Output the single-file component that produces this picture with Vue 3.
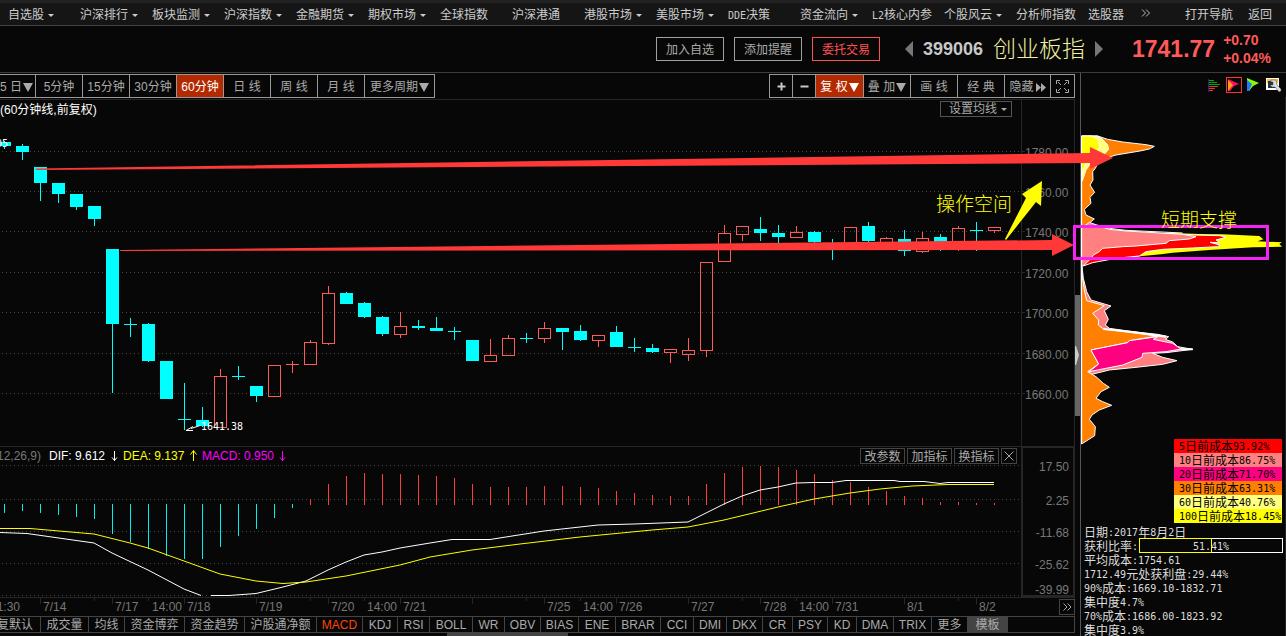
<script setup>
const navItems = [
  ['自选股', true], ['沪深排行', true], ['板块监测', true], ['沪深指数', true], ['金融期货', true],
  ['期权市场', true], ['全球指数', false], ['沪深港通', false], ['港股市场', true], ['美股市场', true],
  ['DDE决策', false], ['资金流向', true], ['L2核心内参', false], ['个股风云', true],
  ['分析师指数', false], ['选股器', false],
]

const periods = ['5分钟', '15分钟', '30分钟', '60分钟', '日 线', '周 线', '月 线']

// [kind, body top, body bottom, wick top, wick bottom]; d = falling, u = rising
const candles = [
  ['d', 142, 146, 141, 149], ['d', 146, 152, 144, 160], ['d', 167, 183, 167, 201], ['d', 183, 194, 183, 203],
  ['d', 194, 207, 194, 210], ['d', 206, 219, 206, 226], ['d', 249, 324, 249, 393], ['d', 324, 325, 318, 337],
  ['d', 324, 361, 323, 362], ['d', 361, 399, 361, 399], ['d', 419, 420, 383, 430], ['d', 420, 426, 407, 427],
  ['u', 376, 428, 369, 428], ['d', 376, 377, 366, 380], ['d', 386, 396, 386, 402], ['u', 365, 397, 365, 397],
  ['u', 364, 365, 361, 373], ['u', 342, 365, 340, 365], ['u', 293, 344, 286, 345], ['d', 293, 304, 292, 304],
  ['d', 303, 317, 302, 318], ['d', 317, 334, 316, 336], ['u', 326, 335, 312, 338], ['d', 326, 328, 320, 330],
  ['d', 328, 331, 317, 331], ['d', 331, 332, 327, 340], ['d', 340, 361, 340, 361], ['u', 355, 362, 339, 362],
  ['u', 338, 356, 335, 356], ['d', 338, 339, 333, 343], ['u', 328, 339, 322, 343], ['d', 328, 332, 328, 350],
  ['d', 331, 340, 325, 341], ['u', 335, 341, 335, 347], ['d', 332, 347, 326, 347], ['d', 347, 348, 338, 352],
  ['d', 348, 352, 344, 353], ['u', 349, 353, 349, 363], ['u', 350, 355, 338, 361], ['u', 262, 351, 262, 357],
  ['u', 233, 262, 225, 262], ['u', 226, 235, 226, 241], ['d', 229, 233, 217, 241], ['d', 233, 237, 225, 243],
  ['u', 232, 238, 226, 238], ['d', 232, 242, 231, 243], ['d', 244, 245, 239, 260], ['u', 227, 245, 227, 245],
  ['d', 226, 241, 222, 243], ['u', 238, 244, 237, 244], ['d', 239, 251, 230, 256], ['u', 238, 252, 232, 253],
  ['d', 237, 245, 234, 251], ['u', 228, 244, 226, 251], ['d', 230, 231, 222, 251], ['u', 227, 231, 227, 233],
].map(([kind, top, bottom, high, low], i) => ({ kind, top, bottom, high, low, x: 4 + 18 * i }))

const priceLevels = [
  ['1780.00', 151], ['1760.00', 191], ['1740.00', 231], ['1720.00', 272],
  ['1700.00', 312], ['1680.00', 353], ['1660.00', 393],
]

const macdBars = [
  513, 511, 513, 515, 517, 519, 534, 542, 549, 556, 559, 559, 547, 536, 529, 518, 508,
  499, 484, 476, 473, 474, 474, 475, 476, 478, 484, 487, 487, 487, 486, 486, 487, 488,
  491, 493, 495, 496, 496, 484, 473, 467, 466, 467, 470, 474, 480, 482, 487, 491, 496,
  498, 502, 502, 503, 503,
].map((v, i) => ({ x: 4 + 18 * i, down: i < 17, top: i < 17 ? 504 : v, height: i < 17 ? v - 504 : 505 - v }))

const macdGrid = [465, 499, 531, 563, 595]
const macdLevels = [['17.50', 471], ['2.25', 505], ['-11.68', 537], ['-25.62', 569], ['-39.99', 594]]

const dates = [
  ['7/14', 43], ['7/17', 115], ['14:00', 152], ['7/18', 187], ['7/19', 259], ['7/20', 331],
  ['14:00', 367], ['7/21', 403], ['7/25', 547], ['14:00', 583], ['7/26', 619], ['7/27', 691],
  ['7/28', 763], ['14:00', 799], ['7/31', 835], ['8/1', 907], ['8/2', 979],
]
const longTicks = [40, 112, 184, 256, 328, 400, 472, 544, 616, 688, 760, 832, 904, 976]
const shortTicks = [94, 148, 310, 364, 526, 580, 742, 796, 958]

const tabs = [
  ['成交量', 48], ['均线', 36], ['资金博弈', 60], ['资金趋势', 60], ['沪股通净额', 72], ['MACD', 46],
  ['KDJ', 35], ['RSI', 32], ['BOLL', 43], ['WR', 32], ['OBV', 36], ['BIAS', 38], ['ENE', 37],
  ['BRAR', 45], ['CCI', 33], ['DMI', 33], ['DKX', 36], ['CR', 30], ['PSY', 35], ['KD', 29],
  ['DMA', 37], ['TRIX', 38], ['更多', 36],
]

const legend = [
  ['5日前成本93.92%', 'd5'], ['10日前成本86.75%', 'd10'], ['20日前成本71.70%', 'd20'],
  ['30日前成本63.31%', 'd30'], ['60日前成本40.76%', 'd60'], ['100日前成本18.45%', 'd100'],
]

const facts = [
  '平均成本:1754.61', '1712.49元处获利盘:29.44%', '90%成本:1669.10-1832.71',
  '集中度4.7%', '70%成本:1686.00-1823.92', '集中度3.9%',
]

const profit = 51.41

// Splits a label into Latin and Chinese runs so that each gets its own face
const runs = (s) => s.split(/([\x20-\x7e]+)/).filter(Boolean).map((t) => ({ t, latin: /^[\x20-\x7e]/.test(t) }))
</script>

<template>
  <div class="app">
    <nav class="nav">
      <a v-for="[label, menu] in navItems" :key="label" href="#" class="nav-item"><span v-for="(r, i) in runs(label)" :key="i" :class="{ mono: r.latin }">{{ r.t }}</span><i v-if="menu" class="caret"></i></a>
      <a href="#" class="nav-more" aria-label="更多">
        <svg width="10" height="8" viewBox="0 0 10 8"><path d="M1 0.500l3.500 3.500L1 7.500M5 0.500l3.500 3.500L5 7.500" fill="none" stroke="#bbb" /></svg>
      </a>
      <div class="nav-end">
        <a href="#">打开导航</a>
        <a href="#">返回</a>
      </div>
    </nav>

    <header class="quote">
      <div class="actions">
        <button type="button">加入自选</button>
        <button type="button">添加提醒</button>
        <button type="button" class="trade">委托交易</button>
      </div>
      <div class="stock">
        <button type="button" class="step" aria-label="上一只"><svg width="9" height="16" viewBox="0 0 9 16"><path d="M9 0v16L1 8z" fill="#777" /></svg></button>
        <span class="code">399006</span>
        <h1>创业板指</h1>
        <button type="button" class="step" aria-label="下一只"><svg width="9" height="16" viewBox="0 0 9 16"><path d="M0 0v16l8-8z" fill="#777" /></svg></button>
      </div>
      <div class="price">
        <strong>1741.77</strong>
        <div class="change"><span>+0.70</span><span>+0.04%</span></div>
      </div>
    </header>

    <main class="workspace">
      <section class="charts">
        <div class="toolbar">
          <div class="group periods">
            <button type="button" class="first">5 日<i class="tri"></i></button>
            <button v-for="p in periods" :key="p" type="button" :class="{ active: p === '60分钟' }">{{ p }}</button>
            <button type="button" class="wide">更多周期<i class="tri"></i></button>
          </div>
          <div class="group tools">
            <button type="button" class="small" aria-label="放大"><svg width="9" height="9" viewBox="0 0 9 9"><path d="M4.500 0.500v8M0.500 4.500h8" stroke="#c8c8c8" stroke-width="2" /></svg></button>
            <button type="button" class="small" aria-label="缩小"><svg width="9" height="9" viewBox="0 0 9 9"><path d="M0.500 4.500h8" stroke="#c8c8c8" stroke-width="2" /></svg></button>
            <button type="button" class="active">复 权<i class="tri"></i></button>
            <button type="button">叠 加<i class="tri"></i></button>
            <button type="button">画 线</button>
            <button type="button">经 典</button>
            <button type="button" class="hide">隐藏<svg width="10" height="9" viewBox="0 0 10 9"><path d="M0 0l5 4.500L0 9zM5 0l5 4.500L5 9z" fill="#aaa" /></svg></button>
            <button type="button" class="small" aria-label="全屏"><svg width="13" height="13" viewBox="0 0 13 13"><path d="M0.500 4V0.500H4M9 0.500h3.500V4M0.500 9v3.500H4M12.500 9v3.500H9" fill="none" stroke="#aaa" /><path d="M2 2l3 3M11 2L8 5M2 11l3-3M11 11L8 8" stroke="#aaa" /></svg></button>
          </div>
        </div>

        <div class="pane">
          <svg class="plot" viewBox="0 99 1080 347" role="img" aria-label="60分钟K线">
            <path d="M0 99.500H1075M1021.500 99V446M1074.500 99V446" class="frame" />
            <path v-for="[label, y] in priceLevels" :key="label" :d="`M2 ${y + 0.5}H1021`" class="dots" />
            <path v-for="[label, y] in priceLevels" :key="'t' + label" :d="`M1022 ${y + 0.5}h3`" class="frame" />
            <g v-for="c in candles" :key="c.x" :class="c.kind === 'd' ? 'fall' : 'rise'">
              <template v-if="c.kind === 'd' || c.bottom - c.top < 2">
                <rect :x="c.x" :y="c.high" width="1" :height="c.low - c.high" />
                <rect :x="c.x - 6" :y="c.top" width="13" :height="c.bottom - c.top" />
              </template>
              <template v-else>
                <rect :x="c.x" :y="c.high" width="1" :height="c.top - c.high" />
                <rect :x="c.x" :y="c.bottom" width="1" :height="c.low - c.bottom" />
                <rect :x="c.x - 5.5" :y="c.top + 0.5" width="12" :height="c.bottom - c.top - 1" class="hollow" />
              </template>
            </g>
            <text v-for="[label, y] in priceLevels" :key="'l' + label" x="1025" :y="y + 6" class="axis">{{ label }}</text>
            <text x="-4" y="147" class="mark">05</text>
            <path d="M186 430.500l7-4M186 430.500h7M191 428.500l9-3" stroke="#fff" fill="none" />
            <text x="201" y="430" class="mark">1641.38</text>
            <rect x="1075" y="295" width="5" height="121" fill="#666" />
            <path d="M1075 346h1l3 9-3 10h-1z" fill="#ccc" />
          </svg>
          <div class="caption">(60分钟线,前复权)</div>
          <button type="button" class="ma">设置均线<i class="caret"></i></button>
        </div>

        <div class="pane">
          <svg class="plot" viewBox="0 446 1080 170" role="img" aria-label="MACD">
            <path d="M0 446.500H1075M1074.500 446V616M0 597.500H1075" class="frame" />
            <rect x="1022" y="447" width="52" height="149" class="frame heavy" />
            <path v-for="y in macdGrid" :key="y" :d="`M2 ${y + 0.5}H1021`" class="dots" />
            <rect v-for="b in macdBars" :key="b.x" :x="b.x" :y="b.top" width="1" :height="b.height" :class="b.down ? 'bar-down' : 'bar-up'" />
            <path class="dif" d="M0 532.500L27 533.500 94 543 112 553 148 570 184 589 201 595.500M211 595.500H229L256 593.500 283 587 306 581 328 570 346 562 364 555 382 552 400 548 430 543 452 539.500H490L544 531 598 525 634 524 688 522 706 513 724 504 742 496 760 490 778 487 796 483 814 482.500H832L846 480.500H894L900 481.500H924L940 483.500 948 482.500H994" />
            <path class="dea" d="M0 528.500H30L94 534 130 543 148 548 184 561 220 574 256 581 283 583.500 306 582 346 576 400 565 430 557 472 550 520 544 580 537 652 530 688 527 724 520 778 507 814 499 850 493 880 489 912 486 948 484.500H994" />
            <path v-for="x in longTicks" :key="'a' + x" :d="`M${x + 0.5} 598v6`" class="frame" />
            <path v-for="x in shortTicks" :key="'b' + x" :d="`M${x + 0.5} 598v3`" class="frame" />
            <text v-for="[label, y] in macdLevels" :key="label" x="1069" :y="y" text-anchor="end" class="axis">{{ label }}</text>
            <text x="20" y="611" text-anchor="end" class="axis">1:30</text>
            <text v-for="[label, x] in dates" :key="'d' + x" :x="x" y="611" class="axis">{{ label }}</text>
            <text x="41" y="460" text-anchor="end" class="axis">12,26,9)</text>
            <text x="49" y="460" class="ind white">DIF: 9.612</text>
            <path d="M114.500 451v10M112 457.500l2.500 3 2.500-3" stroke="#fff" fill="none" />
            <text x="123" y="460" class="ind yellow">DEA: 9.137</text>
            <path d="M193.500 461V451M190.500 454.500l3-4 3 4" stroke="#ff0" fill="none" />
            <text x="202" y="460" class="ind magenta">MACD: 0.950</text>
            <path d="M282.500 451v10M280 457.500l2.500 3 2.500-3" stroke="#f0f" fill="none" />
          </svg>
          <div class="pane-tools">
            <button type="button">改参数</button>
            <button type="button">加指标</button>
            <button type="button">换指标</button>
            <button type="button" class="close" aria-label="关闭"><svg width="10" height="10" viewBox="0 0 10 10"><path d="M0.500 0.500l9 9M9.500 0.500l-9 9" stroke="#aaa" /></svg></button>
          </div>
          <button type="button" class="next" aria-label="下一页"><svg width="9" height="8" viewBox="0 0 9 8"><path d="M0.500 0.500L4 4 0.500 7.500M4.500 0.500L8 4 4.500 7.500" fill="none" stroke="#aaa" /></svg></button>
        </div>

        <div class="tabs">
          <button type="button" class="lead">复默认</button>
          <button v-for="[label, w] in tabs" :key="label" type="button" :class="{ on: label === 'MACD' }" :style="{ width: w + 'px' }">{{ label }}</button>
          <button type="button" class="template">模板</button>
        </div>
        <div class="handle"></div>
      </section>

      <aside class="chips">
        <div class="chip-tools">
          <button type="button" aria-label="筹码分布"><svg width="16" height="16" viewBox="0 0 16 16"><path d="M2.500 2v13" stroke="#23238c" /><path d="M3 3.500h5M3 5.500h8M3 7.500h11" stroke="#0a0" /><path d="M3 9.500h9M3 11.500h6M3 13.500h4" stroke="#e33" /></svg></button>
          <button type="button" aria-label="火焰山" class="picked"><svg width="14" height="14" viewBox="0 0 14 14"><path d="M1 1l11 5-5 2-4 5H1z" fill="#ff1060" /><path d="M1 2l5 5-5 6z" fill="#ffa010" /></svg></button>
          <button type="button" aria-label="活跃度"><svg width="16" height="16" viewBox="0 0 16 16"><path d="M1 1l12 5-6 3-4 5H1z" fill="#8f0" /><path d="M1 3l5 4-3 7H1z" fill="#27f" /></svg></button>
          <button type="button" aria-label="设置"><svg width="16" height="16" viewBox="0 0 16 16"><path d="M0 1h13v12H0z" fill="#fff" /><path d="M1 2h11v4H1z" fill="#fb2" /><path d="M2 4h8v7H2z" fill="#234" /><path d="M5 3h5l1 5 4 4v2l-2 1-4-5H6L4 8h3V5H5z" fill="#ddd" stroke="#444" stroke-width=".5" /></svg></button>
        </div>
        <svg class="chip-chart" viewBox="1080 97 206 342" role="img" aria-label="筹码分布图">
          <path d="M1080.500 97v539" stroke="#555" />
          <path d="M1285.500 97v539" stroke="#222" />
          <g transform="translate(1066 120) scale(.33333)" class="layers">
            <path fill="#ff8000" d="M47 48H95L125 58 170 66 240 74 265 79 250 87 222 93 150 105 100 120 88 145 80 155 81 180 72 195 86 217 72 232 75 250 55 268 60 285 85 297 66 312 55 318 47 325z" />
            <path fill="#ffff80" d="M47 48H95L110 58 125 75 128 88 110 108 75 128 60 150 50 180 47 185z" />
            <path fill="#ff0" d="M47 48H78L95 58 102 78 97 90 60 128 50 155 47 160z" />
            <path fill="#ff0" class="bare" d="M300 338L400 342 470 343 580 348 592 358 575 364 648 367 640 372 648 380 560 382 430 390 320 398 285 403 230 408 200 412 180 390z" />
            <path fill="#f00" d="M47 335L380 345 462 347 480 352 450 360 462 368 432 367 462 375 455 380 380 384 290 388 240 395 220 408 150 415 80 428 52 438z" />
            <path fill="#ff8080" d="M47 325L70 307 92 315 130 328 180 333 350 343 390 350 370 357 310 362 300 370 210 378 170 380 110 385 100 395 82 405 75 415 55 435 47 440z" />
            <path class="edge" d="M92 315L130 325 180 331 350 339" />
            <path fill="#ff8080" d="M48 440L52 475 62 515 75 540 135 558 115 572 127 598 118 615 130 625 200 635 275 643 308 650 298 658 320 666 335 680 380 688 300 698 260 700 290 712 333 722 290 733 210 742 130 750 90 760 47 770z" />
            <path fill="#ff8000" d="M47 455L55 510 62 542 115 557 80 580 98 600 97 615 112 627 190 637 275 648 190 662 185 668 75 690 98 732 65 755 90 770 112 790 130 802 105 815 90 835 110 845 137 856 100 870 78 885 70 898 88 920 86 947 50 970 47 972z" />
            <path fill="#ff0080" d="M75 690L185 668 190 662 275 650 262 658 320 670 345 687 300 695 230 700 228 712 170 735 70 755 98 732z" />
            <path class="edge thick" d="M112 627L200 636 300 650M345 688H380" />
          </g>
          <path d="M1081.500 136v308" stroke="#fff" />
        </svg>
        <ul class="legend">
          <li v-for="[label, cls] in legend" :key="cls" :class="cls"><span v-for="(r, i) in runs(label)" :key="i" :class="{ mono: r.latin }">{{ r.t }}</span></li>
        </ul>
        <div class="facts">
          <p><span v-for="(r, i) in runs('日期:2017年8月2日')" :key="i" :class="{ mono: r.latin }">{{ r.t }}</span></p>
          <p class="ratio">
            获利比率<span class="mono">:</span>
            <span class="meter"><i :style="{ width: profit + '%' }"></i><span class="mono">{{ profit }}%</span></span>
          </p>
          <p v-for="f in facts" :key="f"><span v-for="(r, i) in runs(f)" :key="i" :class="{ mono: r.latin }">{{ r.t }}</span></p>
        </div>
      </aside>

      <svg class="notes" viewBox="0 73 1286 563" aria-hidden="true">
        <path fill="#ff3838" d="M36 168.500L1090 153V147L1113 158 1090 169V163L36 170z" />
        <path fill="#ff3838" d="M120 250L1052 240V234L1074 245 1052 256V250L120 251z" />
        <path fill="#ff0" d="M1005 239L1026 198 1022 194 1042 181 1041 206 1036 202 1006 240z" />
        <rect x="1074.500" y="226.500" width="193" height="32" fill="none" stroke="#f522f5" stroke-width="3" />
        <text x="936" y="211">操作空间</text>
        <text x="1161" y="227">短期支撑</text>
      </svg>
    </main>
  </div>
</template>

<style>
body {
  margin: 0;
  background: #070707;
}
</style>

<style scoped>
.app {
  min-height: 100vh;
  background: #070707;
  color: #aaa;
  font: 12px/14px "Liberation Sans", "Noto Sans CJK SC", sans-serif;
  overflow: hidden;
}
.app *, .app *::before { box-sizing: border-box; }
button {
  margin: 0;
  padding: 0;
  border: 0;
  background: none;
  color: inherit;
  font: inherit;
  white-space: nowrap;
}
a { color: inherit; text-decoration: none; white-space: nowrap; }
.mono { font-family: "DejaVu Sans Mono", monospace; font-size: 10px; }
.caret {
  display: inline-block;
  border: 3px solid transparent;
  border-top-color: currentColor;
  border-bottom: 0;
  margin-left: 4px;
  vertical-align: middle;
}
.tri {
  border: 5px solid transparent;
  border-top: 9px solid currentColor;
  border-bottom: 0;
  margin-left: 1px;
}

.nav {
  display: flex;
  align-items: center;
  height: 26px;
  padding: 2px 14px 0 8px;
  border-top: 3px solid #222;
  border-bottom: 1px solid #444;
  background: #151515;
  color: #ccc;
}
.nav-item { width: 72px; flex: none; }
.nav-more { padding-left: 1px; margin-top: -4px; margin-left: -20px; }
.nav-end { display: flex; gap: 15px; margin-left: auto; }

.quote {
  display: flex;
  align-items: center;
  justify-content: flex-end;
  height: 47px;
  padding-right: 15px;
  border-bottom: 1px solid #3c3c3c;
}
.actions { display: flex; gap: 10px; margin-right: 24px; }
.actions button { width: 68px; height: 24px; padding-top: 2px; border: 1px solid #a0a0a0; }
.actions .trade { border-color: #ff5050; color: #ff5050; }
.stock { display: flex; align-items: center; gap: 10px; margin-right: 28px; }
.step { display: flex; width: 9px; }
.code { color: #c8c8c8; font-weight: bold; font-size: 18px; }
h1 { margin: 0; color: #f0f0a0; font-size: 23px; line-height: 24px; font-weight: 300; }
.price { display: flex; align-items: center; gap: 8px; color: #ff5a5a; }
.price strong { font-size: 23px; line-height: 24px; }
.change { display: flex; flex-direction: column; font-weight: bold; font-size: 14px; line-height: 18px; }

.workspace { position: relative; display: flex; align-items: flex-start; }
.charts { flex: 1; min-width: 0; }
.toolbar { display: flex; justify-content: space-between; padding: 1px 5px 1px 0; }
.group { display: flex; height: 24px; border: 1px solid #999; }
.periods { border-left: 0; }
.group button {
  display: flex;
  align-items: center;
  justify-content: center;
  width: 47px;
  padding-top: 2px;
  border-right: 1px solid #999;
}
.group button:last-child { border-right: 0; }
.group .first { width: 36px; justify-content: flex-end; padding-right: 2px; }
.group .wide { width: 69px; }
.group .small { width: 23px; padding-top: 0; }
.group .active { background: #b42a00; color: #fff; }
.tools .active { width: 48px; }
.group .hide { width: 46px; gap: 2px; }

.pane { position: relative; }
.plot, .chip-chart { display: block; width: 100%; height: auto; }
.chip-chart { overflow: visible; }
.caption { position: absolute; left: 0; top: 4px; color: #fff; }
.ma { position: absolute; right: 68px; top: 2px; width: 72px; height: 16px; border: 1px solid #555; line-height: 14px; padding-left: 4px; }
.pane-tools { position: absolute; right: 63px; top: 2px; display: flex; gap: 2px; }
.pane-tools button { width: 45px; height: 16px; border: 1px solid #444; line-height: 16px; }
.pane-tools .close, .next { width: 16px; display: flex; align-items: center; justify-content: center; }
.next { position: absolute; right: 5px; bottom: 1px; height: 16px; border: 1px solid #444; }

.frame { fill: none; stroke: #262626; }
.heavy { stroke-width: 2; }
.dots { stroke: #444; stroke-dasharray: 1 3; }
.fall { fill: #0ff; }
.rise { fill: #ff5a5a; }
.hollow { fill: none; stroke: #ff5a5a; }
.bar-down { fill: #0ee; }
.bar-up { fill: #ff3c3c; }
.dif { fill: none; stroke: #fff; }
.dea { fill: none; stroke: #ff0; }
.axis { fill: #777; font-size: 12px; }
.ind { font-size: 12px; }
.white { fill: #fff; }
.yellow { fill: #ff0; }
.magenta { fill: #f0f; }
.mark { fill: #fff; font: 10px "DejaVu Sans Mono", monospace; }

.tabs { display: flex; height: 17px; margin-right: 5px; border: 1px solid #444; border-left: 0; }
.tabs button { flex: none; border-right: 1px solid #444; line-height: 17px; overflow: hidden; }
.tabs .lead { display: flex; justify-content: flex-end; width: 41px; padding-right: 7px; }
.tabs .on { color: #ff4500; }
.tabs .template { width: 40px; background: #444; }
.handle { width: 121px; height: 3px; margin-left: 447px; background: #444; }

.chips { flex: none; width: 206px; }
.chip-tools { display: flex; gap: 4px; height: 24px; padding: 4px 4px 4px 125px; border-left: 1px solid #555; }
.chip-tools button { display: flex; align-items: center; justify-content: center; width: 16px; height: 16px; }
.chip-tools .picked { border: 1px solid #f33; }
.layers path { stroke: #fff; vector-effect: non-scaling-stroke; }
.layers .bare { stroke: none; }
.layers .edge { fill: none; }
.layers .thick { stroke-width: 2; }
.legend { width: 108px; margin: 0 4px 0 auto; padding: 0; list-style: none; color: #000; line-height: 16px; }
.legend li { display: flex; height: 14px; padding-left: 5px; white-space: nowrap; }
.d5 { background: #f00; }
.d10 { background: #ff8080; }
.d20 { background: #ff0080; }
.d30 { background: #ff8000; }
.d60 { background: #ffff80; }
.d100 { background: #ff0; }
.facts { padding: 1px 0 0 4px; color: #ddd; line-height: 18px; }
.facts p { display: flex; height: 14px; margin: 0; white-space: nowrap; }
.meter {
  position: relative;
  flex: 1;
  height: 15px;
  margin: 0 3px 0 1px;
  border: 1px solid #fff;
  text-align: center;
  line-height: 14px;
}
.meter i { position: absolute; left: -1px; top: -1px; bottom: -1px; border: 1px solid #ff0; }
.notes { position: absolute; left: 0; top: 0; width: 100%; height: auto; pointer-events: none; }
.notes text { fill: #ff0; font-size: 19px; font-weight: 300; }
</style>
